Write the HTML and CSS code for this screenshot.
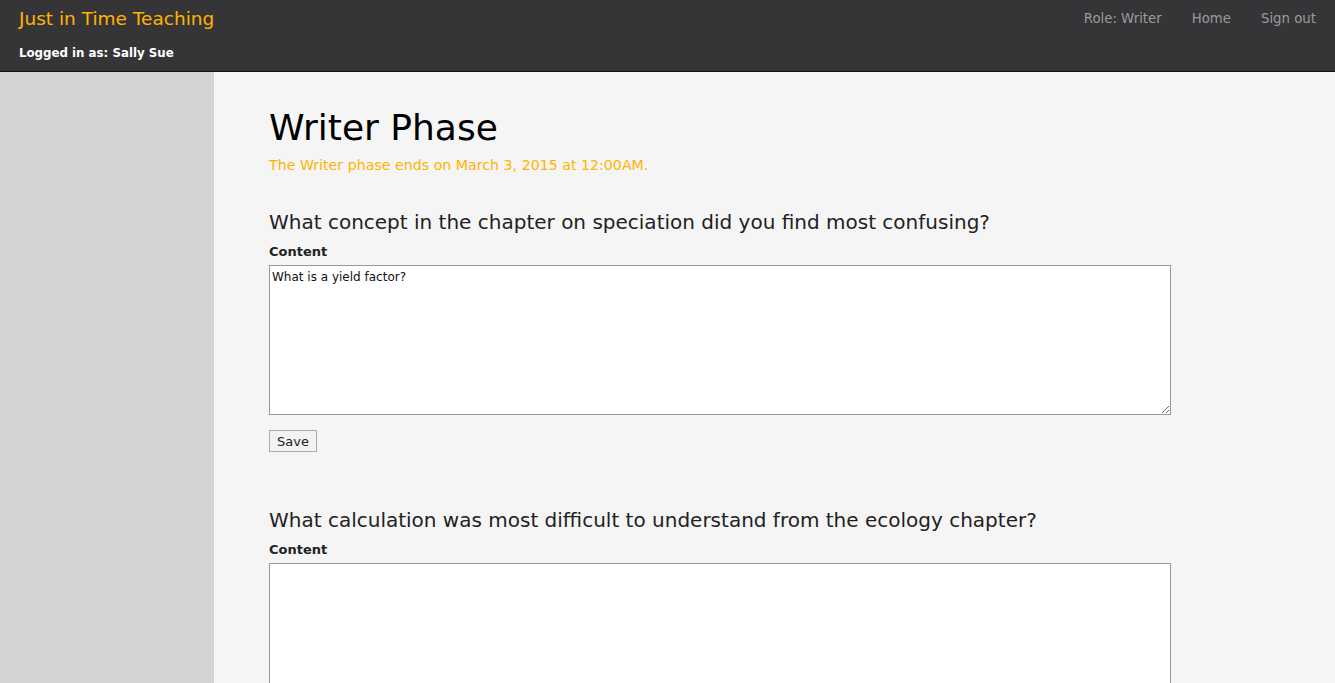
FILE: index.html
```html
<!DOCTYPE html>
<html>
<head>
<meta charset="utf-8">
<link rel="stylesheet" href="styles.css">
</head>
<body>
<header class="topbar">
  <div class="brand">
    <div class="title">Just in Time Teaching</div>
    <div class="user">Logged in as: Sally Sue</div>
  </div>
  <nav class="nav">
    <a>Role: Writer</a>
    <a>Home</a>
    <a>Sign out</a>
  </nav>
</header>
<div class="layout">
  <aside class="sidebar"></aside>
  <main class="main">
    <h1 class="page-title">Writer Phase</h1>
    <p class="deadline">The Writer phase ends on March 3, 2015 at 12:00AM.</p>
    <section class="question">
      <h3 class="q-title">What concept in the chapter on speciation did you find most confusing?</h3>
      <label class="q-label">Content</label>
      <textarea class="q-text">What is a yield factor?</textarea>
      <button class="save">Save</button>
    </section>
    <section class="question">
      <h3 class="q-title">What calculation was most difficult to understand from the ecology chapter?</h3>
      <label class="q-label">Content</label>
      <textarea class="q-text"></textarea>
    </section>
  </main>
</div>
</body>
</html>
```

FILE: styles.css
```css
html, body {
  margin: 0;
  padding: 0;
  height: 100%;
  overflow: hidden;
}
body {
  font-family: "DejaVu Sans", Verdana, sans-serif;
  background: #f5f5f5;
  color: #222;
}
.topbar {
  height: 71px;
  background: #353537;
  border-bottom: 1px solid #111;
  display: flex;
  justify-content: space-between;
  align-items: flex-start;
  padding: 0 19px;
}
.brand {
  display: flex;
  flex-direction: column;
}
.title {
  color: #ffb400;
  font-size: 18.5px;
  margin-top: 8px;
  line-height: 22px;
}
.user {
  color: #fff;
  font-size: 11.8px;
  font-weight: bold;
  margin-top: 15px;
  line-height: 16px;
}
.nav {
  display: flex;
  gap: 30px;
  margin-top: 11px;
}
.nav a {
  color: #9a9b9d;
  font-size: 13.3px;
  line-height: 16px;
}
.layout {
  display: flex;
  height: calc(100% - 72px);
}
.sidebar {
  width: 214px;
  background: #d3d3d3;
  flex: none;
}
.main {
  flex: 1;
  background: #f5f5f5;
  padding: 0 0 0 55px;
}
.page-title {
  font-weight: normal;
  font-size: 36px;
  color: #000;
  margin: 34px 0 0;
  line-height: 44px;
}
.deadline {
  color: #ffb400;
  font-size: 14.2px;
  margin: 6px 0 0;
  line-height: 18px;
}
.question {
  display: flex;
  flex-direction: column;
  align-items: flex-start;
}
.q-title {
  font-weight: normal;
  font-size: 20px;
  color: #222;
  margin: 36px 0 0;
  line-height: 24px;
}
.q-label {
  font-weight: bold;
  font-size: 13px;
  margin-top: 10px;
  line-height: 16px;
}
.q-text {
  margin-top: 5px;
  width: 902px;
  height: 150px;
  box-sizing: border-box;
  border: 1px solid #999;
  background: #fff;
  font-family: "DejaVu Sans", Verdana, sans-serif;
  font-size: 12px;
  padding: 4px 2px;
  resize: vertical;
  color: #111;
}
.save {
  margin-top: 15px;
  font-family: "DejaVu Sans", Verdana, sans-serif;
  font-size: 13px;
  height: 22px;
  padding: 0 7px;
  background: #f3f3f3;
  border: 1px solid #aaa;
  color: #222;
  border-radius: 0;
}
.question + .question .q-title {
  margin-top: 56px;
}
.question + .question .q-label {
  margin-top: 10px;
}
```
